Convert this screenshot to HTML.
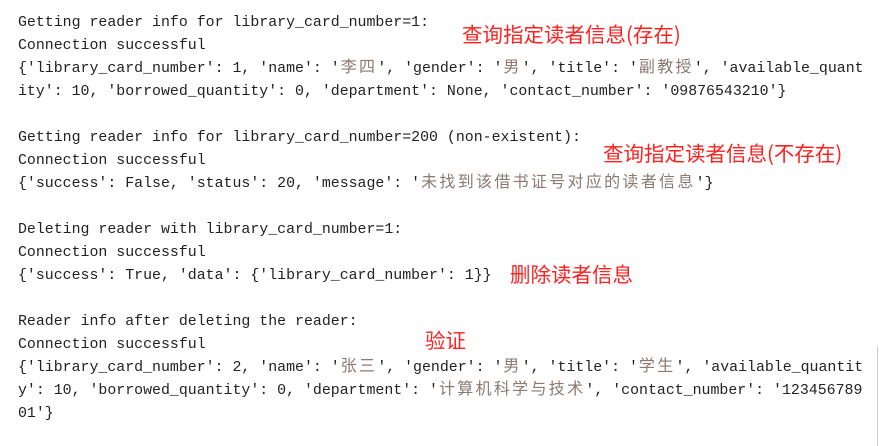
<!DOCTYPE html>
<html><head><meta charset="utf-8"><style>
html,body{margin:0;padding:0;background:#fff;width:879px;height:446px;overflow:hidden;position:relative}
.t{position:absolute;left:18px;top:12px;font-family:"Liberation Mono","Noto Sans CJK SC",monospace;font-size:14.9px;color:#222;letter-spacing:0}
.t div{height:23px;line-height:23px;white-space:pre}
.c{color:#8a7a70;font-family:"Noto Sans CJK SC",sans-serif;font-size:16px;letter-spacing:2.3px;line-height:0;padding-left:1px}
.r{position:absolute;color:#ff2020;font-family:"Noto Sans CJK SC",sans-serif;font-size:20.5px;line-height:24px;white-space:nowrap}
.vl{position:absolute;left:877px;top:346px;width:1px;height:100px;background:#ccc}
</style></head><body>
<div class="t"><div>Getting reader info for library_card_number=1:</div><div>Connection successful</div><div>{'library_card_number': 1, 'name': '<span class="c">李四</span>', 'gender': '<span class="c">男</span>', 'title': '<span class="c">副教授</span>', 'available_quant</div><div>ity': 10, 'borrowed_quantity': 0, 'department': None, 'contact_number': '09876543210'}</div><div></div><div>Getting reader info for library_card_number=200 (non-existent):</div><div>Connection successful</div><div>{'success': False, 'status': 20, 'message': '<span class="c">未找到该借书证号对应的读者信息</span>'}</div><div></div><div>Deleting reader with library_card_number=1:</div><div>Connection successful</div><div>{'success': True, 'data': {'library_card_number': 1}}</div><div></div><div>Reader info after deleting the reader:</div><div>Connection successful</div><div>{'library_card_number': 2, 'name': '<span class="c">张三</span>', 'gender': '<span class="c">男</span>', 'title': '<span class="c">学生</span>', 'available_quantit</div><div>y': 10, 'borrowed_quantity': 0, 'department': '<span class="c">计算机科学与技术</span>', 'contact_number': '123456789</div><div>01'}</div></div>
<div class="r" style="left:462px;top:21px">查询指定读者信息(存在)</div>
<div class="r" style="left:603px;top:140px">查询指定读者信息(不存在)</div>
<div class="r" style="left:510px;top:261px">删除读者信息</div>
<div class="r" style="left:425px;top:327px">验证</div>
<div class="vl"></div>
</body></html>
